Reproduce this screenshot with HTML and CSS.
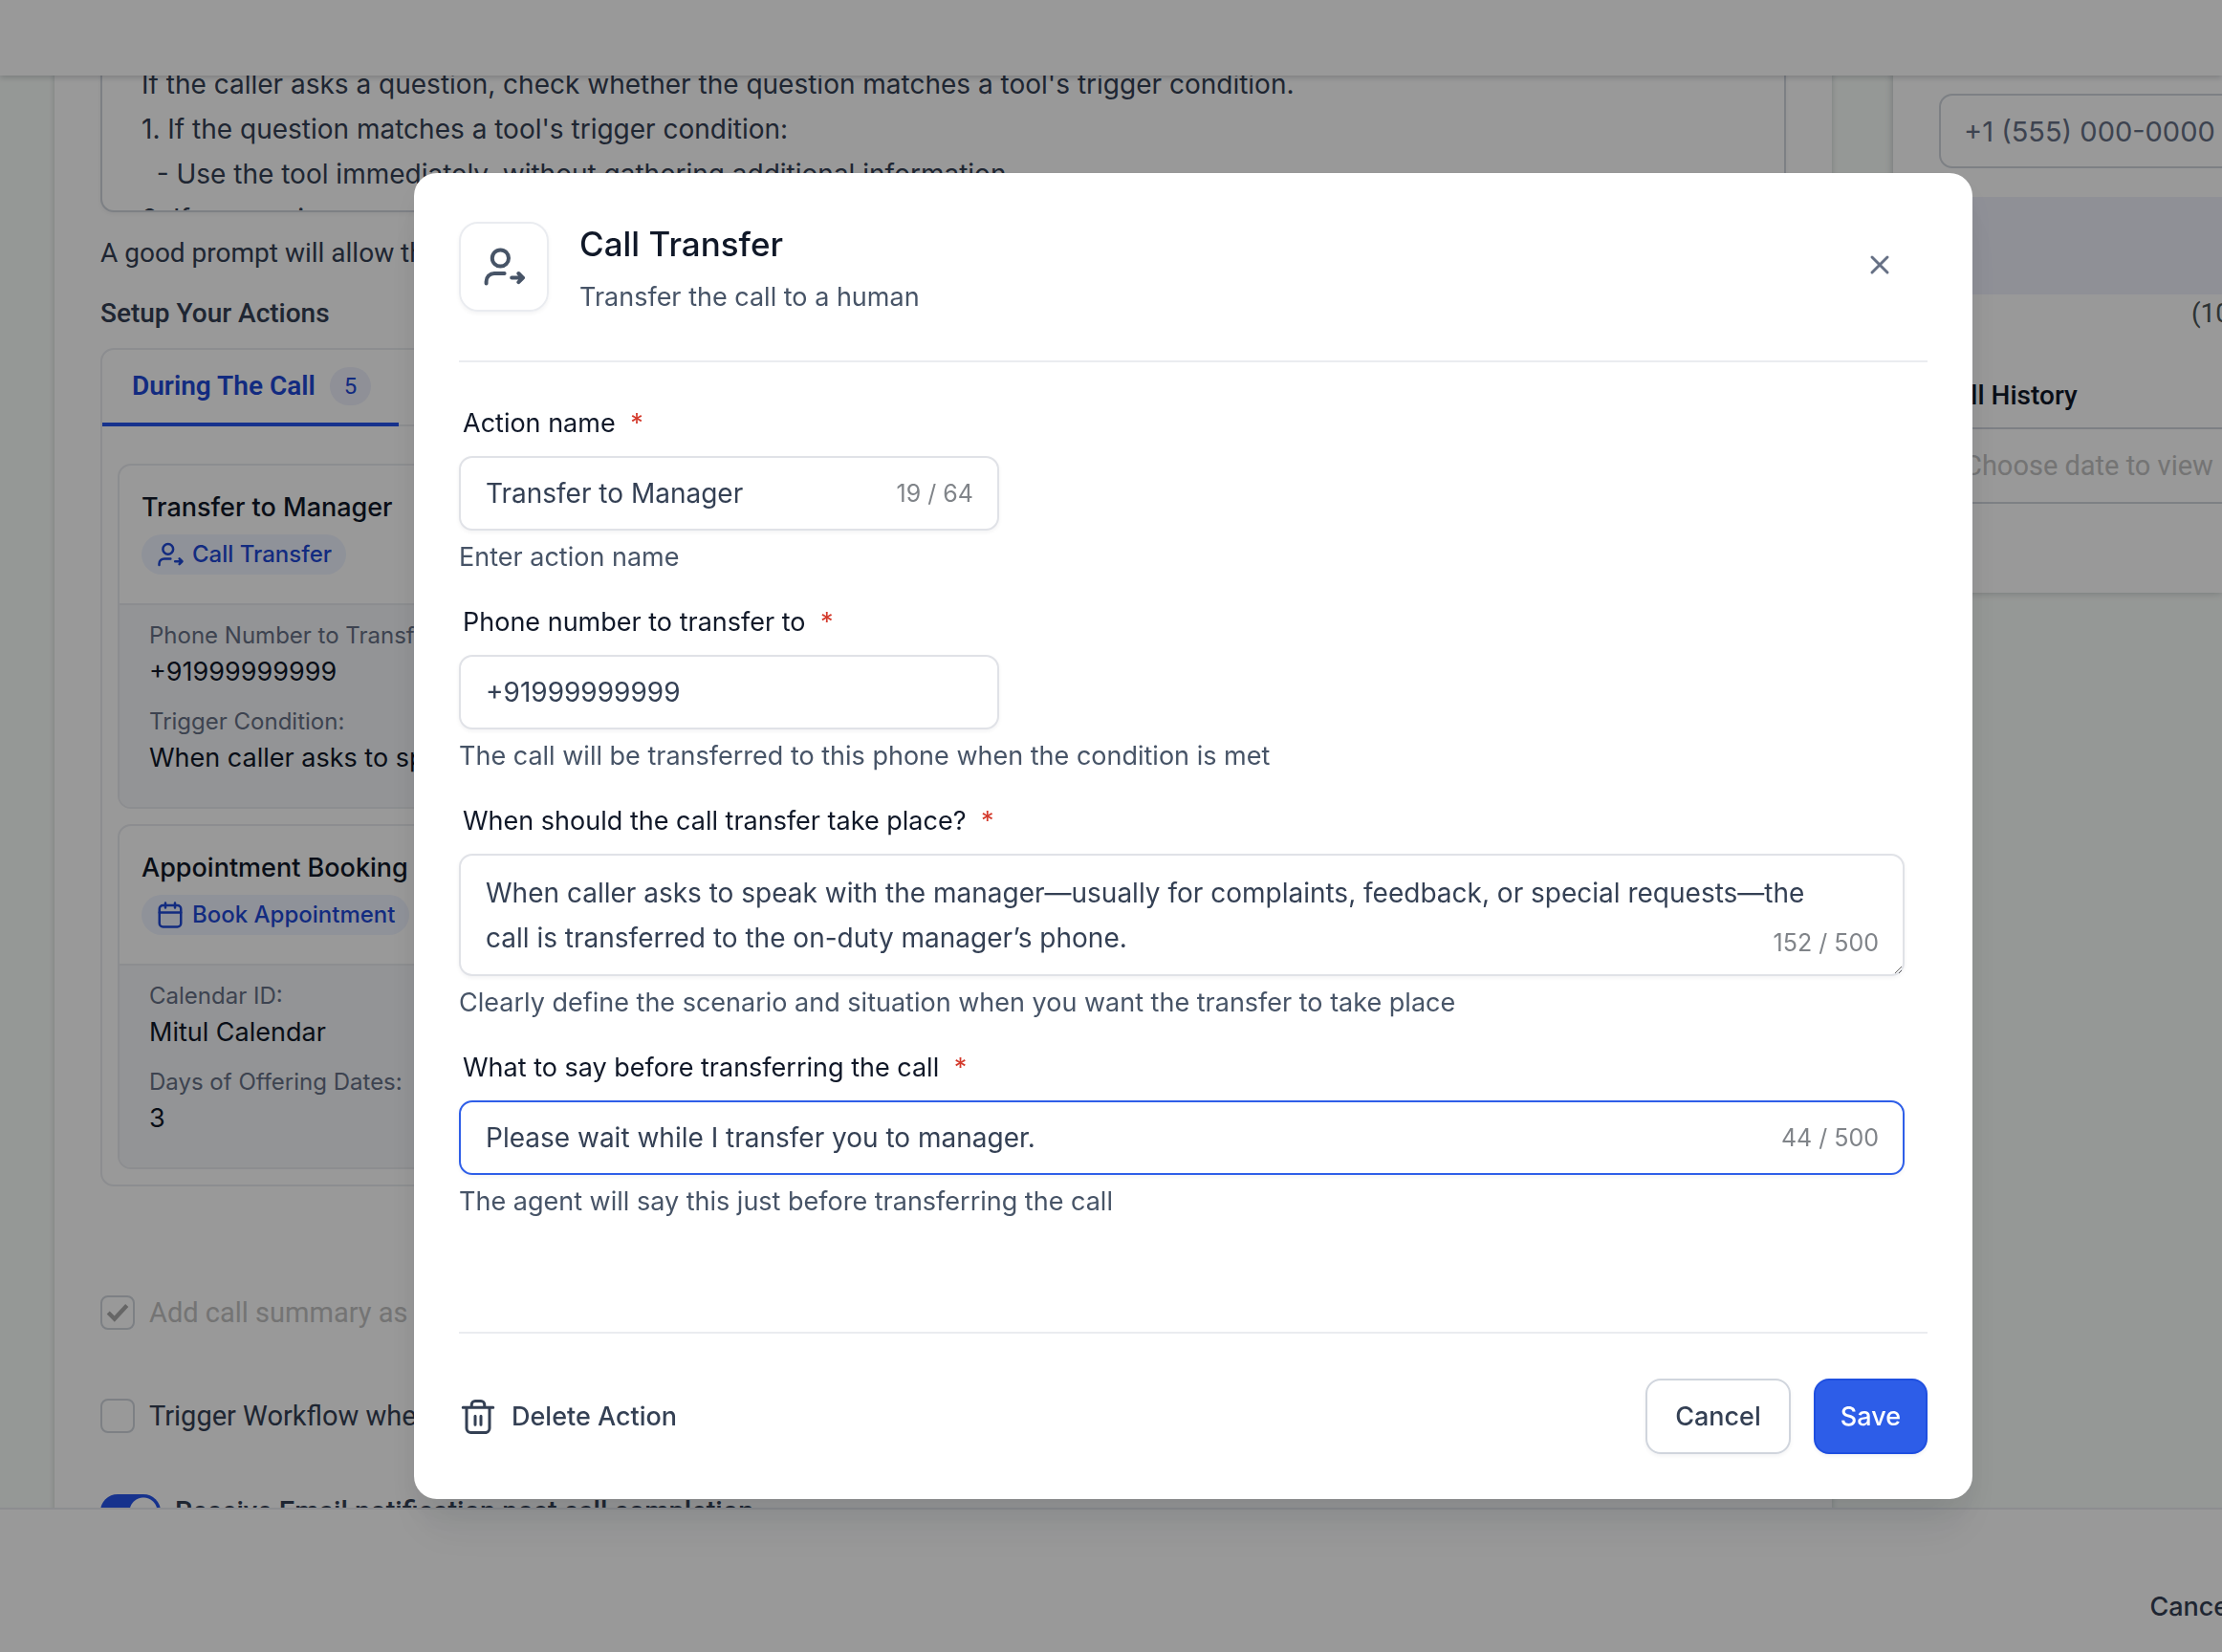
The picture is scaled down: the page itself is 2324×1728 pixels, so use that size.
FILE: index.html
```html
<!DOCTYPE html>
<html lang="en">
<head>
    <meta charset="UTF-8">
    <meta name="viewport" content="width=device-width, initial-scale=1.0">
    <title>Call Transfer</title>
    <link rel="stylesheet" href="styles.css">
</head>
<body>
    <header class="topbar"></header>

    <main class="workspace">
        <section class="panel">
            <textarea class="prompt" aria-label="Prompt">If the caller asks a question, check whether the question matches a tool's trigger condition.
1. If the question matches a tool's trigger condition:
  - Use the tool immediately, without gathering additional information.
2. If anyone is on a new call</textarea>
            <p class="prompt-hint">A good prompt will allow the AI to handle the call</p>
            <h2 class="section-title">Setup Your Actions</h2>

            <div class="actions">
                <div class="tabs">
                    <button class="tab active">During The Call <span class="count">5</span></button>
                </div>
                <article class="action-card">
                    <div class="action-head">
                        <h3>Transfer to Manager</h3>
                        <span class="pill">
                            <svg class="icon" viewBox="0 0 24 24"><circle cx="10.200" cy="7.500" r="4.300"/><path d="M2.800 20.700v-1a4.200 4.200 0 0 1 4.200-4.200h5.300M16.100 17.800H22M19.700 15.500l2.300 2.300-2.300 2.300"/></svg>
                            Call Transfer
                        </span>
                    </div>
                    <dl class="action-body">
                        <dt>Phone Number to Transfer:</dt>
                        <dd>+91999999999</dd>
                        <dt>Trigger Condition:</dt>
                        <dd>When caller asks to speak with the manager</dd>
                    </dl>
                </article>
                <article class="action-card">
                    <div class="action-head">
                        <h3>Appointment Booking</h3>
                        <span class="pill">
                            <svg class="icon" viewBox="0 0 24 24"><rect x="3" y="4" width="18" height="18" rx="3"/><path d="M3 10h18M8 2v4M16 2v4"/></svg>
                            Book Appointment
                        </span>
                    </div>
                    <dl class="action-body">
                        <dt>Calendar ID:</dt>
                        <dd>Mitul Calendar</dd>
                        <dt>Days of Offering Dates:</dt>
                        <dd>3</dd>
                    </dl>
                </article>
            </div>

            <label class="option disabled"><input type="checkbox" checked disabled> Add call summary as a note</label>
            <label class="option"><input type="checkbox"> Trigger Workflow when the call ends</label>
            <label class="option switch"><input type="checkbox" checked> Receive Email notification post call completion</label>
        </section>

        <aside class="test-panel">
            <input class="side-input" type="tel" placeholder="+1 (555) 000-0000" aria-label="Phone number">
            <div class="band"></div>
            <p class="limit">(10 calls)</p>
            <h2 class="side-title">Call History</h2>
            <input class="side-input date" type="text" placeholder="Choose date to view" aria-label="Date">
        </aside>
    </main>

    <footer class="bottombar">
        <button class="footer-cancel">Cancel</button>
    </footer>

    <!-- Call transfer modal -->
    <div class="overlay">
        <div class="modal" role="dialog" aria-labelledby="modalTitle">
            <div class="modal-header">
                <div class="modal-icon">
                    <svg class="icon" viewBox="0 0 24 24"><circle cx="10.200" cy="7.500" r="4.300"/><path d="M2.800 20.700v-1a4.200 4.200 0 0 1 4.200-4.200h5.300M16.100 17.800H22M19.700 15.500l2.300 2.300-2.300 2.300"/></svg>
                </div>
                <div class="modal-heading">
                    <h1 id="modalTitle">Call Transfer</h1>
                    <p>Transfer the call to a human</p>
                </div>
                <button class="close" aria-label="Close">
                    <svg class="icon" viewBox="0 0 24 24"><path d="M4 4l16 16M20 4L4 20"/></svg>
                </button>
            </div>

            <form class="modal-form">
                <div class="field short">
                    <label for="actionName">Action name <span class="required">*</span></label>
                    <div class="control">
                        <input type="text" id="actionName" value="Transfer to Manager">
                        <span class="counter">19 / 64</span>
                    </div>
                    <p class="help">Enter action name</p>
                </div>
                <div class="field short">
                    <label for="phone">Phone number to transfer to <span class="required">*</span></label>
                    <div class="control">
                        <input type="tel" id="phone" value="+91999999999">
                    </div>
                    <p class="help">The call will be transferred to this phone when the condition is met</p>
                </div>
                <div class="field">
                    <label for="condition">When should the call transfer take place? <span class="required">*</span></label>
                    <div class="control">
                        <textarea id="condition">When caller asks to speak with the manager—usually for complaints, feedback, or special requests—the call is transferred to the on-duty manager’s phone.</textarea>
                        <span class="counter">152 / 500</span>
                    </div>
                    <p class="help">Clearly define the scenario and situation when you want the transfer to take place</p>
                </div>
                <div class="field">
                    <label for="message">What to say before transferring the call <span class="required">*</span></label>
                    <div class="control focused">
                        <input type="text" id="message" value="Please wait while I transfer you to manager.">
                        <span class="counter">44 / 500</span>
                    </div>
                    <p class="help">The agent will say this just before transferring the call</p>
                </div>
            </form>

            <div class="modal-footer">
                <button class="delete">
                    <svg class="icon" viewBox="0 0 24 24"><path d="M1.500 5.500h21M4 5.500V20a3 3 0 0 0 3 3h10a3 3 0 0 0 3-3V5.500M7.500 5V3.500a2.500 2.500 0 0 1 2.500-2.500h4a2.500 2.500 0 0 1 2.500 2.500V5M10 11.500v6M14 11.500v6"/></svg>
                    Delete Action
                </button>
                <button class="btn">Cancel</button>
                <button class="btn primary">Save</button>
            </div>
        </div>
    </div>
</body>
</html>
```
FILE: styles.css
```css
* {
    box-sizing: border-box;
}
body {
    margin: 0;
    height: 100vh;
    overflow: hidden;
    display: flex;
    flex-direction: column;
    font-family: Inter, "Liberation Sans", sans-serif;
    font-size: 27px;
    line-height: 40px;
    color: #344054;
    background-color: #f9fdfa;
}
h1, h2, h3, p, dl, dd {
    margin: 0;
}
button, input, textarea {
    font: inherit;
    color: inherit;
    margin: 0;
}
button {
    cursor: pointer;
    background: none;
    border: none;
    padding: 0;
}
.icon {
    fill: none;
    stroke: currentColor;
    stroke-width: 2;
    stroke-linecap: round;
    stroke-linejoin: round;
    flex: none;
}

/* Page behind the modal */
.topbar {
    position: relative;
    flex: none;
    height: 79px;
    background: white;
    box-shadow: 0 2px 6px rgba(16, 24, 40, 0.2);
}
.workspace {
    flex: 1;
    min-height: 0;
    display: flex;
    align-items: flex-start;
    gap: 64px;
    padding-left: 57px;
    overflow: hidden;
}
.panel {
    flex: 1;
    margin-top: -36px;
    padding: 0 48px;
    background: white;
    box-shadow: 0 0 6px rgba(16, 24, 40, 0.2);
}
.prompt {
    display: block;
    width: 100%;
    height: 179px;
    padding: 20px 41px;
    border: 2px solid #d0d5dd;
    border-radius: 14px;
    box-shadow: 0 2px 4px rgba(16, 24, 40, 0.05);
    font-size: 28px;
    line-height: 47px;
    resize: none;
    overflow: hidden;
    background: white;
}
.prompt-hint {
    margin-top: 23px;
    font-family: Roboto, sans-serif;
    font-size: 28px;
}
.section-title {
    margin: 23px 0 16px;
    font-family: Roboto, sans-serif;
    font-size: 28px;
    font-weight: 500;
}
.actions {
    border: 2px solid #eaecf0;
    border-radius: 14px;
    padding-bottom: 16px;
}
.tabs {
    display: flex;
    border-bottom: 2px solid #eaecf0;
}
.tab {
    display: flex;
    align-items: center;
    gap: 15px;
    height: 80px;
    padding: 0 29px 0 31px;
    margin-bottom: -2px;
    border-bottom: 4px solid #2554eb;
    color: #1f49d6;
    font-family: Roboto, sans-serif;
    font-size: 28px;
    font-weight: 600;
}
.count {
    padding: 0 15px;
    border-radius: 20px;
    background: #eef1fc;
    font-size: 24px;
    font-weight: 400;
}
.action-card {
    margin: 16px 16px 0;
    border: 2px solid #eaecf0;
    border-radius: 14px;
    overflow: hidden;
}
.tabs + .action-card {
    margin-top: 39px;
}
.action-head {
    padding: 24px 23px 30px;
    border-bottom: 2px solid #eaecf0;
}
.action-head h3 {
    font-size: 27px;
    font-weight: 500;
    color: #101828;
}
.pill {
    display: flex;
    align-items: center;
    gap: 8px;
    width: fit-content;
    height: 42px;
    margin-top: 8px;
    padding: 0 15px;
    border-radius: 21px;
    background: #eff4ff;
    color: #1f49d6;
    font-size: 24px;
    font-weight: 500;
}
.pill .icon {
    width: 30px;
    height: 30px;
}
.action-body {
    padding: 14px 31px 17px;
    background: #f5f7fa;
}
.action-body dt {
    font-size: 24px;
    line-height: 36px;
    color: #667085;
}
.action-body dd {
    margin-bottom: 14px;
    color: #101828;
}
.option {
    display: flex;
    align-items: center;
    gap: 15px;
    margin-top: 68px;
    font-family: Roboto, sans-serif;
    font-size: 29px;
}
.actions + .option {
    margin-top: 112px;
}
.option.switch {
    gap: 15px;
    margin-top: 60px;
    font-weight: 500;
}
.option input {
    appearance: none;
    width: 36px;
    height: 36px;
    border: 2px solid #d0d5dd;
    border-radius: 8px;
}
.option.disabled {
    color: #c2c2c2;
}
.option input:checked {
    background: no-repeat center / 26px url("data:image/svg+xml,%3Csvg xmlns='http://www.w3.org/2000/svg' viewBox='0 0 24 24' fill='none' stroke='%23aaa' stroke-width='4'%3E%3Cpath d='M3 12l6 6L21 5'/%3E%3C/svg%3E");
}
.option.switch input {
    width: 63px;
    height: 36px;
    border: none;
    border-radius: 18px;
    background: radial-gradient(circle at 45px 18px, white 14px, #2554eb 15px);
}
.test-panel {
    flex: none;
    width: 344px;
    height: 577px;
    margin-top: -36px;
    padding-top: 55px;
    background: white;
    box-shadow: 0 0 8px rgba(16, 24, 40, 0.25);
}
.side-input {
    display: block;
    width: 360px;
    height: 78px;
    margin-left: 48px;
    padding: 0 24px;
    border: 2px solid #d0d5dd;
    border-radius: 14px;
    background: white;
    font-size: 29px;
}
.side-input.date {
    height: 80px;
    font-family: Roboto, sans-serif;
}
.side-input::placeholder {
    color: #667085;
}
.side-input.date::placeholder {
    color: #c2c2c2;
}
.band {
    height: 102px;
    margin-top: 30px;
    background: #eef0fb;
}
.limit {
    width: 160px;
    margin: 0 0 46px 312px;
    font-family: Roboto, sans-serif;
    font-size: 28px;
    color: #4b5557;
}
.side-title {
    margin: 0 0 13px 48px;
    font-family: Roboto, sans-serif;
    font-size: 28px;
    font-weight: 500;
    color: #101828;
}
.bottombar {
    position: relative;
    flex: none;
    height: 151px;
    padding-top: 82px;
    border-top: 2px solid #eaecf0;
    background: white;
}
.footer-cancel {
    display: block;
    margin-left: auto;
    margin-right: -14px;
    font-weight: 500;
}

/* Modal */
.overlay {
    position: fixed;
    inset: 0;
    display: flex;
    align-items: flex-start;
    padding: 181px 261px 0 433px;
    background: rgba(0, 0, 0, 0.4);
}
.modal {
    flex: 1;
    padding: 48px 47px 47px;
    border-radius: 24px;
    background: white;
    box-shadow: 0 40px 48px -8px rgba(16, 24, 40, 0.07), 0 16px 32px rgba(16, 24, 40, 0.06);
}
.modal-header {
    display: flex;
    align-items: flex-start;
    padding-bottom: 46px;
    border-bottom: 2px solid #eaecf0;
}
.modal-icon {
    display: flex;
    align-items: center;
    justify-content: center;
    width: 94px;
    height: 94px;
    margin: 3px 32px 0 0;
    border: 2px solid #eaecf0;
    border-radius: 20px;
    box-shadow: 0 2px 4px rgba(16, 24, 40, 0.05);
    color: #475467;
}
.modal-icon .icon {
    width: 48px;
    height: 48px;
}
.modal-heading {
    flex: 1;
    color: #475467;
}
.modal-heading h1 {
    margin-bottom: 10px;
    font-size: 35px;
    line-height: 52px;
    font-weight: 500;
    color: #101828;
}
.close {
    padding: 36px 38px 36px 36px;
    color: #667085;
}
.close .icon {
    display: block;
    width: 24px;
    height: 24px;
    stroke-width: 3;
}
.modal-form {
    padding-top: 44px;
}
.field {
    margin-bottom: 28px;
}
.field label {
    display: block;
    margin: 0 4px 14px;
    color: #101828;
}
.required {
    margin-left: 8px;
    color: #d43a2c;
}
.control {
    position: relative;
    width: calc(100% - 24px);
}
.short .control {
    width: 565px;
}
.control input, .control textarea {
    display: block;
    width: 100%;
    height: 78px;
    padding: 0 26px;
    border: 2px solid #e0e2e7;
    border-radius: 14px;
    background: white;
    box-shadow: 0 2px 4px rgba(16, 24, 40, 0.05);
    font-size: 28px;
}
.control textarea {
    height: 128px;
    padding: 16px 60px 16px 26px;
    line-height: 47px;
    overflow: hidden;
    resize: vertical;
}
.control.focused input {
    border-color: #2f5fe8;
}
.counter {
    position: absolute;
    right: 27px;
    bottom: 19px;
    font-size: 25px;
    color: #808489;
}
textarea + .counter {
    bottom: 15px;
}
.help {
    margin-top: 8px;
    color: #475467;
}
.modal-footer {
    display: flex;
    align-items: center;
    gap: 24px;
    margin-top: 116px;
    padding-top: 47px;
    border-top: 2px solid #eaecf0;
    font-weight: 500;
}
.delete {
    display: flex;
    align-items: center;
    gap: 15px;
    margin-right: auto;
}
.delete .icon {
    width: 40px;
    height: 36px;
}
.btn {
    height: 79px;
    padding: 0 29px;
    border: 2px solid #d0d5dd;
    border-radius: 16px;
    box-shadow: 0 2px 4px rgba(16, 24, 40, 0.05);
}
.btn.primary {
    padding: 0 26px;
    border-color: #1f4fe0;
    background: #2d5de8;
    color: white;
}
```
